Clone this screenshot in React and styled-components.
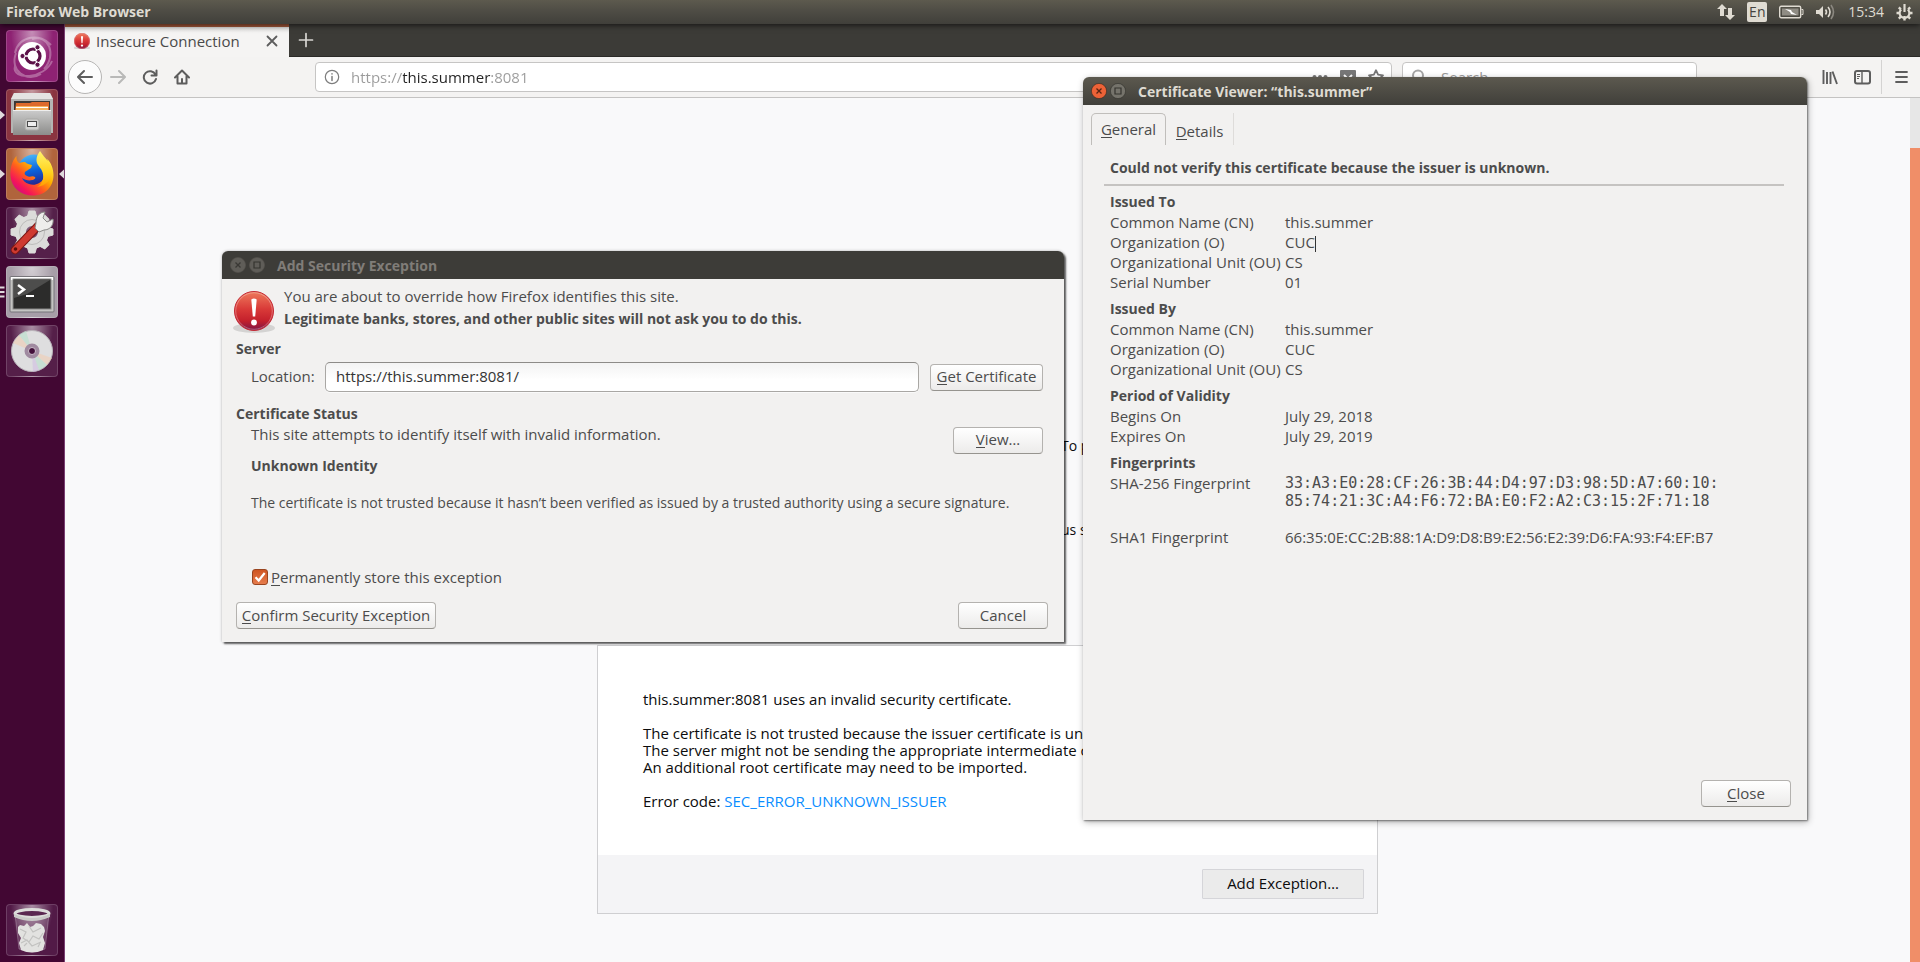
import React from 'react';
import styled, { createGlobalStyle, css } from 'styled-components';

const sans = '"Open Sans", "Noto Sans", sans-serif';
const mono = '"DejaVu Sans Mono", "Liberation Mono", monospace';

const Global = createGlobalStyle`
  * { box-sizing: border-box; }
  html, body, #root { height: 100%; margin: 0; }
  body { font: 15px/20px ${sans}; color: #4c4c4c; overflow: hidden; }
  button, input { font: inherit; color: inherit; margin: 0; }
  h1, h2, p { margin: 0; }
  svg { display: block; flex: none; }
`;

/* ---------- desktop shell ---------- */

const Desktop = styled.div`
  position: relative;
  min-height: 100%;
  display: grid;
  grid-template-columns: 65px 1fr;
  grid-template-rows: 24px 1fr;
  background: #f9f9fa;
`;

const TopBar = styled.header`
  grid-column: 1 / -1;
  display: flex;
  align-items: center;
  justify-content: space-between;
  padding: 0 7px 0 6px;
  color: #dfdbd2;
  background: linear-gradient(#5d5a4e, #504e46 40%, #403f3a);
  box-shadow: 0 1px 6px rgba(0, 0, 0, 0.7);
  z-index: 2;
`;

const AppName = styled.strong`
  font-size: 14px;
`;

const Indicators = styled.div`
  display: flex;
  align-items: center;
  gap: 12px;
  font-size: 14px;
`;

const Keyboard = styled.span`
  width: 20px;
  height: 20px;
  border-radius: 2px;
  background: #dfdbd2;
  color: #45443f;
  font-size: 14px;
  text-align: center;
`;

const Launcher = styled.nav`
  display: flex;
  flex-direction: column;
  gap: 7px;
  padding: 6px 0;
  background: #420733;
  border-right: 1px solid #7a3f72;
`;

const Slot = styled.div`
  position: relative;
  padding-left: 6px;
  ${(p) => p.$last && 'margin-top: auto;'}
`;

const Tile = styled.button`
  display: flex;
  align-items: center;
  justify-content: center;
  width: 52px;
  height: 52px;
  padding: 0;
  border: 1px solid rgba(255, 255, 255, 0.16);
  border-radius: 4px;
  background: ${(p) => p.$bg};
`;

const Marker = styled.svg`
  position: absolute;
  top: 20px;
  ${(p) => (p.$right ? 'right: 0;' : 'left: 0;')}
`;

/* ---------- browser ---------- */

const Browser = styled.main`
  display: grid;
  grid-template-rows: 33px 41px 1fr;
  min-width: 0;
`;

const TabStrip = styled.div`
  display: flex;
  background: #3c3b37;
  border-bottom: 1px solid #2b2a27;
`;

const BrowserTab = styled.div`
  display: flex;
  align-items: center;
  width: 224px;
  height: 33px;
  padding: 0 9px 2px;
  gap: 6px;
  border-top: 3px solid #a2583b;
  background: linear-gradient(#dcdbda, #f5f4f3 6px);
  color: #4a4a4a;
`;

const TabTitle = styled.span`
  flex: 1;
  white-space: nowrap;
`;

const PlainButton = styled.button`
  display: flex;
  align-items: center;
  justify-content: center;
  width: ${(p) => p.$w || 32}px;
  height: ${(p) => p.$h || 32}px;
  padding: 0;
  border: 0;
  background: none;
`;

const BackButton = styled(PlainButton)`
  width: 34px;
  height: 34px;
  border: 1px solid #b6b5b4;
  border-radius: 50%;
  background: #fcfcfc;
`;

const Toolbar = styled.div`
  display: flex;
  align-items: center;
  padding: 0 3px;
  background: #f4f3f2;
  border-bottom: 1px solid #c4c3c2;
`;

const Nav = styled.div`
  display: flex;
  align-items: center;
  width: 247px;
`;

const Field = styled.label`
  display: flex;
  align-items: center;
  gap: ${(p) => (p.$width ? 14 : 11)}px;
  height: 30px;
  padding: 0 7px 0 8px;
  background: #fff;
  border: 1px solid #c6c5c4;
  border-radius: 4px;
  ${(p) => (p.$width ? `width: ${p.$width}px; margin-left: 10px;` : 'flex: 1;')}
`;

const fieldText = css`
  flex: 1;
  min-width: 0;
  padding: 0;
  border: 0;
  outline: 0;
  background: transparent;
`;

/* The host stands out in dark; the scheme and the port stay grey. */
const UrlInput = styled.input`
  ${fieldText}
  color: transparent;
  background: linear-gradient(90deg, #9b9b9b 52px, #222 52px 140px, #9b9b9b 140px);
  background-clip: text;
  -webkit-background-clip: text;
`;

const SearchInput = styled.input`
  ${fieldText}
  &::placeholder { color: #999; opacity: 1; }
`;

const Tools = styled.div`
  display: flex;
  align-items: center;
  padding-left: 117px;
`;

const Divider = styled.span`
  width: 1px;
  height: 34px;
  margin: 0 3px;
  background: #d4d3d2;
`;

const Viewport = styled.div`
  display: grid;
  grid-template-columns: 1fr 10px;
`;

const Page = styled.article`
  width: 781px;
  margin: 0 auto;
  padding-top: 336px;
  color: #0c0c0d;
`;

const PageNote = styled.p`
  height: ${(p) => p.$h}px;
  padding-left: 464px;
  font-size: 14px;
  line-height: 24px;
`;

const Track = styled.div`
  padding-top: 50px;
  background: #e7e7e7;
`;

const Thumb = styled.div`
  height: 100%;
  background: #f08e68;
`;

const Card = styled.section`
  border: 1px solid #cfcfd1;
  background: #fff;
`;

const CardBody = styled.div`
  display: flex;
  flex-direction: column;
  gap: 17px;
  padding: 45px;
  line-height: 17px;
  white-space: nowrap;
`;

const ErrorLink = styled.a`
  color: #0a8dff;
  text-decoration: none;
`;

const CardFooter = styled.footer`
  display: flex;
  justify-content: flex-end;
  padding: 14px 13px;
  background: #f4f4f6;
`;

const ExceptionButton = styled.button`
  width: 162px;
  height: 30px;
  padding: 0 0 2px;
  border: 1px solid #d5d5d9;
  border-radius: 1px;
  background: #ebebeb;
`;

/* ---------- dialog windows ---------- */

const Window = styled.section`
  position: absolute;
  left: ${(p) => p.$x}px;
  top: ${(p) => p.$y}px;
  width: ${(p) => p.$w}px;
  display: flex;
  flex-direction: column;
  ${(p) => p.$h && `height: ${p.$h}px;`}
  background: #f2f1f0;
  border-radius: 6px 6px 0 0;
  box-shadow: ${(p) => (p.$active
    ? '1px 1px 2px rgba(0,0,0,.45), 1px 2px 7px rgba(0,0,0,.3)'
    : '2px 2px 2px rgba(0,0,0,.6), 0 0 3px rgba(0,0,0,.3)')};
  z-index: ${(p) => (p.$active ? 4 : 3)};
`;

const TitleBar = styled.header`
  display: flex;
  align-items: center;
  gap: 3px;
  height: 28px;
  padding: 0 8px;
  border-radius: 6px 6px 0 0;
  color: ${(p) => (p.$active ? '#dfdbd2' : '#807d78')};
  background: ${(p) => (p.$active ? 'linear-gradient(#5c594f, #403f3a)' : '#3d3c38')};
`;

const Title = styled.h1`
  padding: 2px 0 0 9px;
  font-size: 14px;
  line-height: 20px;
`;

const Strong = styled.h2`
  font-size: 14px;
  line-height: 20px;
  padding-left: ${(p) => p.$indent || 0}px;
`;

const Key = styled.span`
  display: inline-block;
  line-height: 18px;
  box-shadow: inset 0 -1px currentColor;
`;

const DialogButton = styled.button`
  width: ${(p) => p.$w}px;
  height: 27px;
  padding: 0 0 2px;
  border: 1px solid #b4b2af;
  border-bottom-color: #96948f;
  border-radius: 4px;
  line-height: 20px;
  white-space: nowrap;
  background: linear-gradient(#fff, #ecebea);
`;

const ExceptionBody = styled.div`
  display: flex;
  flex-direction: column;
  padding: 6px 16px 13px 14px;
`;

const Intro = styled.div`
  display: flex;
  align-items: flex-start;
  gap: 8px;
  height: 54px;
  margin-left: -4px;
  line-height: 22px;
`;

const IntroBold = styled.strong`
  font-size: 14px;
`;

const LocationRow = styled.div`
  display: flex;
  align-items: center;
  gap: 11px;
  margin: 3px 5px 12px 15px;
`;

const LocationLabel = styled.label`
  width: 63px;
  padding-bottom: 2px;
`;

const LocationInput = styled.input`
  flex: 1;
  height: 30px;
  padding: 0 10px 2px;
  border: 1px solid #a9a7a4;
  border-top-color: #8d8b88;
  border-radius: 5px;
  color: #333;
  background: linear-gradient(#f3f3f3, #fff 60%);
  box-shadow: 0 1px #fafafa;
`;

const StatusRow = styled.div`
  display: flex;
  justify-content: space-between;
  height: 32px;
  padding: 0 5px 0 15px;
`;

const StatusAction = styled.div`
  align-self: center;
  display: flex;
`;

const Description = styled.p`
  margin: 17px 0 54px;
  padding-left: 15px;
  font-size: 14px;
  white-space: nowrap;
`;

const CheckLabel = styled.label`
  display: flex;
  align-items: center;
  gap: 3px;
  margin: 0 0 15px 16px;
`;

const Check = styled.input`
  appearance: none;
  width: 16px;
  height: 16px;
  border: 1px solid #99441f;
  border-radius: 3px;
  background: url("data:image/svg+xml,%3Csvg xmlns='http://www.w3.org/2000/svg' viewBox='0 0 14 14'%3E%3Cpath d='M2.5 7.2l3.2 3.3L11.7 3' fill='none' stroke='white' stroke-width='2.2'/%3E%3C/svg%3E"),
    linear-gradient(#cf5522, #e67c4c);
`;

const Actions = styled.div`
  display: flex;
  justify-content: ${(p) => (p.$end ? 'flex-end' : 'space-between')};
  ${(p) => p.$end && 'margin-top: auto; padding: 0 16px 13px;'}
`;

const Tabs = styled.div`
  display: flex;
  padding: 8px 8px 0;
`;

const Tab = styled.button`
  height: 32px;
  background: none;
  ${(p) => (p.$selected
    ? 'width: 75px; padding: 0 0 2px; border: 1px solid #c0bebb; border-bottom: 0; border-radius: 5px 5px 0 0;'
    : 'width: 68px; padding: 4px 0 0; border: 0; border-right: 1px solid #dedcda;')}
`;

const Panel = styled.div`
  margin: 13px 23px 0 21px;
`;

const Verdict = styled(Strong)`
  padding: 0 6px;
  margin-bottom: 6px;
`;

const Rule = styled.hr`
  height: 2px;
  margin: 0 0 6px;
  border: 0;
  background: #c5c3c1;
`;

const CertTable = styled.table`
  width: 100%;
  table-layout: fixed;
  border-spacing: 0;
  padding: 0 6px;
  text-align: left;
`;

const NameColumn = styled.col`
  width: 175px;
`;

const Group = styled.th`
  padding: ${(p) => (p.$first ? 0 : 7)}px 0 0;
  font-size: 14px;
`;

const Name = styled.th`
  padding: 0;
  font-weight: 400;
  vertical-align: top;
  white-space: nowrap;
`;

const Value = styled.td`
  padding: 0;
  vertical-align: top;
  white-space: nowrap;
  ${(p) => p.$mono && `height: 54px; padding-top: 1px; font: 15px/18px ${mono};`}
`;

const Caret = styled.span`
  display: inline-block;
  width: 1px;
  height: 16px;
  background: #333;
  vertical-align: middle;
`;

/* ---------- drawings ---------- */

const Alert = ({ w, h, view = '0 -1 44 50' }) => (
  <svg width={w} height={h} viewBox={view} aria-hidden="true">
    <defs>
      <linearGradient id="alertFill" x1="0" y1="0" x2="0" y2="1">
        <stop offset="0" stopColor="#ee7a5c" />
        <stop offset=".45" stopColor="#d93a38" />
        <stop offset=".75" stopColor="#c4202c" />
        <stop offset="1" stopColor="#7d1546" />
      </linearGradient>
    </defs>
    <ellipse cx="22" cy="42" rx="21" ry="5" fill="#000" opacity=".12" />
    <circle cx="22" cy="25" r="19.5" fill="url(#alertFill)" stroke="#c42a35" />
    <circle cx="22" cy="25" r="18.3" fill="none" stroke="#fff" strokeOpacity=".3" />
    <path d="M19.3 13.5q2.7-2 5.4 0l-1.5 17h-2.4z" fill="#fff" />
    <circle cx="22" cy="36.5" r="2.9" fill="#fff" />
  </svg>
);

const Controls = ({ active }) => (
  <>
    <PlainButton $w={16} $h={16} aria-label="Close window">
      <svg width="16" height="16" viewBox="0 0 16 16">
        <circle cx="8" cy="8" r="7.6" fill={active ? '#ec6237' : '#5f5d58'} stroke={active ? '#3a2a20' : '#55534e'} strokeWidth=".6" />
        <path d="M5.5 5.5l5 5m0-5l-5 5" stroke={active ? '#582412' : '#3a3935'} strokeWidth="1.3" />
      </svg>
    </PlainButton>
    <PlainButton $w={16} $h={16} aria-label="Maximize window">
      <svg width="16" height="16" viewBox="0 0 16 16">
        <circle cx="8" cy="8" r="7.6" fill={active ? '#75736b' : '#5f5d58'} stroke={active ? '#33322e' : '#55534e'} strokeWidth=".6" />
        <path d="M5 5h6v6H5z" fill="none" stroke="#35342f" strokeWidth="1.2" />
      </svg>
    </PlainButton>
  </>
);

const Stroke = ({ d, w = 16, color = '#5d5d5d', sw = 2, children }) => (
  <svg width={w} height={w} viewBox="0 0 16 16" fill="none" stroke={color} strokeWidth={sw} strokeLinecap="round" strokeLinejoin="round">
    <path d={d} />
    {children}
  </svg>
);

const UbuntuIcon = () => (
  <svg width="50" height="50" viewBox="0 0 50 50">
    <path d="M25 8C42 3 50 24 37 38M8 22C12 4 34 2 44 14M8 35C4 50 38 48 45 30M9 22C2 40 20 52 34 43" fill="none" stroke="#fff" strokeOpacity=".3" strokeWidth="2" />
    <circle cx="25" cy="25" r="14" fill="#fff" />
    <circle cx="26" cy="25" r="7" fill="none" stroke="#5c1148" strokeWidth="3.2" />
    <path d="M26 25L16 25M26 25l6-10M26 25l6 10" stroke="#fff" strokeWidth="1.4" />
    <circle cx="26" cy="25" r="5" fill="#fff" />
    <g fill="#5c1148" stroke="#fff" strokeWidth="1">
      <circle cx="15.5" cy="25" r="2.6" /><circle cx="30.5" cy="16.3" r="2.6" /><circle cx="30.5" cy="33.7" r="2.6" />
    </g>
  </svg>
);

const FilesIcon = () => (
  <svg width="50" height="50" viewBox="0 0 50 50">
    <defs>
      <linearGradient id="steel" x1="0" y1="0" x2="0" y2="1"><stop offset="0" stopColor="#ccc" /><stop offset="1" stopColor="#8c8c8a" /></linearGradient>
    </defs>
    <path d="M7 3h36l3 6v34H4V9z" fill="#b5b5b3" />
    <path d="M7 3h36l3 6H4z" fill="#e4e4e2" />
    <path d="M7 11h36v11H7z" fill="#3c3835" />
    <path d="M9 13h14l2-1h17v9H8z" fill="#dd6a2c" />
    <path d="M9 16h32v5H9z" fill="#f5b35c" /><path d="M9 17h32v1H9z" fill="#fff" />
    <path d="M6 20h38v25H6z" fill="url(#steel)" />
    <path d="M6 20h38v1H6z" fill="#eee" />
    <rect x="18" y="29" width="14" height="11" rx="2" fill="#cfcfcd" stroke="#a8a8a6" />
    <rect x="20.5" y="31.500" width="9" height="5" fill="#eee" stroke="#4a4a4a" />
  </svg>
);

const FirefoxIcon = () => (
  <svg width="50" height="50" viewBox="0 0 50 50">
    <defs>
      <linearGradient id="fox" x1=".9" y1=".1" x2=".15" y2=".9">
        <stop offset="0" stopColor="#fff04a" /><stop offset=".35" stopColor="#ffb300" />
        <stop offset=".6" stopColor="#ff5a1f" /><stop offset=".85" stopColor="#f5145a" /><stop offset="1" stopColor="#d0107e" />
      </linearGradient>
      <linearGradient id="globe" x1=".3" y1="0" x2=".5" y2="1"><stop offset="0" stopColor="#4cb8f8" /><stop offset=".5" stopColor="#0b62dc" /><stop offset="1" stopColor="#2b1c80" /></linearGradient>
      <linearGradient id="flame" x1="0" y1="0" x2="0" y2="1"><stop offset="0" stopColor="#fff36e" /><stop offset=".6" stopColor="#ffd21c" /><stop offset="1" stopColor="#ff9a00" /></linearGradient>
    </defs>
    <circle cx="27" cy="22" r="16.500" fill="url(#globe)" />
    <path d="M9.500 7C5 12 3 19 3.500 27 4.500 39 14 46.500 26 46.500 38 46.500 46.500 38 46.500 26 46.500 20 44 13 40 10c2 5 1 13-3 19-3 6-10 8-15 6-4-1-6-4-7-6 3 2 7 3 10 2 2 0 4-2 3-3-3-2-5 1-8-1-2-1-3-2-2-4 1-1 3-2 6-4l1-3c-3-1-5-1-7-3-4 0-5 1-6 1-1-1-3-3-2.500-7z" fill="url(#fox)" />
    <path d="M33 2c-3 4-5 9-2 14 3 4 6 7 5 14-1 3-2 6-6 8 9-1 15-8 15-16 0-8-7-12-12-20z" fill="url(#flame)" />
  </svg>
);

const SettingsIcon = () => (
  <svg width="50" height="50" viewBox="0 0 50 50">
    <g fill="#dcdcda">
      {[0, 45, 90, 135, 180, 225, 270, 315].map((a) => (
        <path key={a} d="M20 10l2-7h6l2 7z" stroke="#dcdcda" transform={`rotate(${a} 25 24)`} />
      ))}
    </g>
    <circle cx="25" cy="24" r="11.500" fill="none" stroke="#dcdcda" strokeWidth="11" />
    <circle cx="25" cy="24" r="12.500" fill="none" stroke="#bdbdbb" />
    <path d="M8 42L31 18" stroke="#7a1713" strokeWidth="8.500" strokeLinecap="round" />
    <path d="M8 42L31 18" stroke="#cf3a30" strokeWidth="6.500" strokeLinecap="round" />
    <circle cx="8.500" cy="41" r="1.800" fill="#5b0d0b" />
    <path d="M29 15c0-6 3-11 9-11l-2 6 4 4 6-3c1 6-3 11-9 11l-5 2-4-4z" fill="#eeeeec" stroke="#8a8a88" />
  </svg>
);

const TerminalIcon = () => (
  <svg width="50" height="50" viewBox="0 0 50 50">
    <rect x="3" y="9.500" width="44" height="35.500" rx="1" fill="#c4c4c2" stroke="#77757a" />
    <path d="M4 10h42v3H4z" fill="#fff" />
    <rect x="6" y="12" width="38" height="30" fill="#2c2c2b" stroke="#888" />
    <path d="M7 13h36L20 27 7 31z" fill="#4d4d4c" />
    <path d="M11 18l6 4.500-6 4.500" fill="none" stroke="#fff" strokeWidth="2.500" />
    <path d="M19 29h8" stroke="#fff" strokeWidth="2" />
  </svg>
);

const DiscIcon = () => (
  <svg width="50" height="50" viewBox="0 0 50 50">
    <circle cx="25" cy="25" r="20.500" fill="#dededf" stroke="#b9b3ba" />
    <path d="M25 25L6 17l6-8zM25 25l20 7-5 7z" fill="#f0cdb4" opacity=".6" />
    <path d="M25 25L12 9l7-4zM25 25l15 14-8 5z" fill="#b8e0cc" opacity=".6" />
    <path d="M25 25l7 19-6 2z" fill="#cdb8e4" opacity=".5" />
    <circle cx="25" cy="25" r="5.500" fill="none" stroke="#a08aa0" strokeWidth="4" />
    <circle cx="25" cy="25" r="3.500" fill="#42103a" stroke="#cbbccb" />
  </svg>
);

const TrashIcon = () => (
  <svg width="50" height="50" viewBox="0 0 50 50">
    <path d="M8 9l4 35q13 6 26 0l4-35z" fill="#fff" fillOpacity=".14" stroke="#fff" strokeOpacity=".25" />
    <path d="M11 22l2-2 4 1 3-3 3 4 3-1 3-3 5 1 3 3 1 4-2 6 2 6-2 7q-11 5-22 0l-2-7 2-5-3-5z" fill="#e2e2e0" />
    <path d="M13 24l6 3-3 6 6 4 4-6 6 3 4-6M14 38l6-3 5 6 9-4M22 21l4 6 8-4M17 41l3-3M31 42l2-4" fill="none" stroke="#c2c2c0" strokeWidth="1.200" />
    <ellipse cx="25" cy="8.500" rx="17" ry="4" fill="#5a2750" stroke="#dcdcda" strokeWidth="3" />
    <path d="M7 9q18 8 36 0v3q-18 8-36 0z" fill="#c9c9c7" />
  </svg>
);

const tileShine = 'radial-gradient(ellipse at 50% 0, rgba(255,255,255,.5), rgba(255,255,255,0) 60%)';
const launcherItems = [
  { name: 'Search your computer', bg: `${tileShine}, #8e2273`, Icon: UbuntuIcon },
  { name: 'Files', bg: `${tileShine}, #8a3440`, Icon: FilesIcon, left: 'arrow' },
  { name: 'Firefox Web Browser', bg: `${tileShine}, #b0643c`, Icon: FirefoxIcon, left: 'arrow', right: true },
  { name: 'System Settings', bg: `${tileShine}, #55204a`, Icon: SettingsIcon },
  { name: 'Terminal', bg: `${tileShine}, #a79ea8`, Icon: TerminalIcon, left: 'dashes' },
  { name: 'Disc', bg: `${tileShine}, #551f49`, Icon: DiscIcon },
  { name: 'Trash', bg: `${tileShine}, #521a47`, Icon: TrashIcon, last: true },
];

const certificate = [
  { group: 'Issued To', rows: [['Common Name (CN)', 'this.summer'], ['Organization (O)', 'CUC', 'caret'], ['Organizational Unit (OU)', 'CS'], ['Serial Number', '01']] },
  { group: 'Issued By', rows: [['Common Name (CN)', 'this.summer'], ['Organization (O)', 'CUC'], ['Organizational Unit (OU)', 'CS']] },
  { group: 'Period of Validity', rows: [['Begins On', 'July 29, 2018'], ['Expires On', 'July 29, 2019']] },
  {
    group: 'Fingerprints',
    rows: [
      ['SHA-256 Fingerprint', '33:A3:E0:28:CF:26:3B:44:D4:97:D3:98:5D:A7:60:10:\n85:74:21:3C:A4:F6:72:BA:E0:F2:A2:C3:15:2F:71:18', 'mono'],
      ['SHA1 Fingerprint', '66:35:0E:CC:2B:88:1A:D9:D8:B9:E2:56:E2:39:D6:FA:93:F4:EF:B7'],
    ],
  },
];

function SystemBar() {
  return (
    <TopBar>
      <AppName>Firefox Web Browser</AppName>
      <Indicators>
        <svg width="18" height="18" viewBox="0 0 18 18" fill="#dfdbd2">
          <path d="M5 1l5 5H7v7H3V6H0zM13 17l-5-5h3V5h4v7h3z" />
        </svg>
        <Keyboard>En</Keyboard>
        <svg width="25" height="14" viewBox="0 0 25 14" fill="none" stroke="#dfdbd2">
          <rect x=".7" y="1.200" width="21" height="11.500" rx="1.500" strokeWidth="1.400" />
          <rect x="3" y="3.500" width="16.500" height="7" fill="#8f8c84" stroke="none" />
          <path d="M22.500 4.500h1.500v5h-1.500" />
          <path d="M6 4l6 1 1 2 5 3-6-1-1-2z" fill="#fff" stroke="none" />
        </svg>
        <svg width="20" height="18" viewBox="0 0 20 18" fill="none" stroke="#dfdbd2" strokeWidth="1.600">
          <path d="M0 7h3l4-4v12l-4-4H0z" fill="#dfdbd2" stroke="none" />
          <path d="M9.500 6.500q2 2.500 0 5M12 4q4 5 0 10" />
          <path d="M15 2q5 7 0 14" stroke="#8b8880" />
        </svg>
        <span>15:34</span>
        <svg width="17" height="17" viewBox="0 0 17 17" fill="none" stroke="#dfdbd2">
          <path d="M8.500 12v4.500M.5 9h3M13.500 9h3M2.800 3.300l2 2M14.200 3.300l-2 2M2.800 14.700l2-2M14.200 14.700l-2-2" strokeWidth="2.400" />
          <path d="M5.200 5.500a4.900 4.900 0 1 0 6.600 0" strokeWidth="2.200" />
          <path d="M8.500 0v8" strokeWidth="2.200" />
        </svg>
      </Indicators>
    </TopBar>
  );
}

function Dock() {
  return (
    <Launcher aria-label="Launcher">
      {launcherItems.map(({ name, bg, Icon, left, right, last }) => (
        <Slot key={name} $last={last}>
          {left && (
            <Marker width="5" height="12" viewBox="0 0 5 12">
              {left === 'arrow'
                ? <path d="M0 1.500L5 6 0 10.500z" fill="#dfd9dc" />
                : <path d="M0 1.500h4.500M0 6h4.500M0 10.500h4.500" stroke="#dfd9dc" strokeWidth="2" />}
            </Marker>
          )}
          <Tile $bg={bg} aria-label={name}><Icon /></Tile>
          {right && <Marker $right width="5" height="12" viewBox="0 0 5 12"><path d="M5 1.500L0 6l5 4.500z" fill="#dfd9dc" /></Marker>}
        </Slot>
      ))}
    </Launcher>
  );
}

function BrowserWindow() {
  return (
    <Browser>
      <TabStrip>
        <BrowserTab>
          <Alert w={16} h={16} view="2 5 40 40" />
          <TabTitle>Insecure Connection</TabTitle>
          <PlainButton $w={16} $h={16} aria-label="Close tab"><Stroke d="M3.500 3.500l9 9m0-9l-9 9" sw={1.8} /></PlainButton>
        </BrowserTab>
        <PlainButton $w={34} aria-label="New tab"><Stroke d="M8 1.500v13M1.500 8h13" color="#d8d6d2" sw={1.7} /></PlainButton>
      </TabStrip>
      <Toolbar>
        <Nav>
          <BackButton aria-label="Back"><Stroke d="M15 8H1.500M7 2L1 8l6 6" /></BackButton>
          <PlainButton aria-label="Forward"><Stroke d="M1 8h13.500M9 2l6 6-6 6" color="#b9b9b8" /></PlainButton>
          <PlainButton aria-label="Reload"><Stroke d="M13.500 5.500A6.200 6.200 0 1 0 14 10M14.500 1.500v5h-5" /></PlainButton>
          <PlainButton aria-label="Home"><Stroke d="M1 8.500L8 1.500l7 7M3.500 7.500V14.500h9V7.500M8 14v-4" /></PlainButton>
        </Nav>
        <Field>
          <Stroke d="M8 7.500v4M8 4.800v.1" sw={1.5} color="#7d7d7d"><circle cx="8" cy="8" r="6.700" strokeWidth="1.200" /></Stroke>
          <UrlInput aria-label="Address" defaultValue="https://this.summer:8081" />
          <svg width="16" height="16" viewBox="0 0 16 16" fill="#777"><circle cx="2.500" cy="8" r="2" /><circle cx="8" cy="8" r="2" /><circle cx="13.500" cy="8" r="2" /></svg>
          <svg width="18" height="16" viewBox="0 0 18 16"><path d="M1 2q0-1 1-1h14q1 0 1 1v6a8 7 0 0 1-16 0z" fill="#777" /><path d="M5 6l4 4 4-4" fill="none" stroke="#fff" strokeWidth="2" /></svg>
          <Stroke d="M8 1.200l2.100 4.500 4.900.6-3.600 3.400.9 4.900L8 12.200l-4.300 2.400.9-4.900L1 6.300l4.900-.6z" color="#777" sw={1.8} />
        </Field>
        <Field $width={295}>
          <Stroke d="M10.500 10.500L14.500 14.500" color="#a5a5a5"><circle cx="7" cy="6.500" r="5" /></Stroke>
          <SearchInput aria-label="Search" placeholder="Search" />
        </Field>
        <Tools>
          <PlainButton aria-label="Library">
            <svg width="16" height="16" viewBox="0 0 16 16" stroke="#5d5d5d" strokeWidth="1.900"><path d="M1.500 1v14M5 3v12M8.500 3v12M10.500 2.500L15 15" /></svg>
          </PlainButton>
          <PlainButton aria-label="Sidebars">
            <svg width="17" height="16" viewBox="0 0 17 16" fill="none" stroke="#5d5d5d"><rect x="1" y="2" width="15" height="12.500" rx="2" strokeWidth="2" /><path d="M8 2v12" strokeWidth="1.400" /><path d="M3 5.500h3M3 7.500h3M3 9.500h2" /></svg>
          </PlainButton>
          <Divider />
          <PlainButton aria-label="Menu"><Stroke d="M3 3h11M3 8h11M3 13h11" sw={1.8} /></PlainButton>
        </Tools>
      </Toolbar>
      <Viewport>
        <Page>
          <PageNote $h={84}>To p</PageNote>
          <PageNote $h={127}>us s</PageNote>
          <Card>
            <CardBody>
              <p>this.summer:8081 uses an invalid security certificate.</p>
              <p>
                The certificate is not trusted because the issuer certificate is unknown.<br />
                The server might not be sending the appropriate intermediate certificates.<br />
                An additional root certificate may need to be imported.
              </p>
              <p>Error code: <ErrorLink href="#error">SEC_ERROR_UNKNOWN_ISSUER</ErrorLink></p>
            </CardBody>
            <CardFooter><ExceptionButton>Add Exception…</ExceptionButton></CardFooter>
          </Card>
        </Page>
        <Track><Thumb /></Track>
      </Viewport>
    </Browser>
  );
}

function ExceptionDialog() {
  return (
    <Window $x={222} $y={251} $w={842} role="dialog" aria-label="Add Security Exception">
      <TitleBar><Controls /><Title>Add Security Exception</Title></TitleBar>
      <ExceptionBody>
        <Intro>
          <Alert w={44} h={50} />
          <div>
            <p>You are about to override how Firefox identifies this site.</p>
            <IntroBold>Legitimate banks, stores, and other public sites will not ask you to do this.</IntroBold>
          </div>
        </Intro>
        <Strong>Server</Strong>
        <LocationRow>
          <LocationLabel htmlFor="location">Location:</LocationLabel>
          <LocationInput id="location" defaultValue="https://this.summer:8081/" />
          <DialogButton $w={113}><Key>G</Key>et Certificate</DialogButton>
        </LocationRow>
        <Strong>Certificate Status</Strong>
        <StatusRow>
          <p>This site attempts to identify itself with invalid information.</p>
          <StatusAction><DialogButton $w={90}><Key>V</Key>iew…</DialogButton></StatusAction>
        </StatusRow>
        <Strong $indent={15}>Unknown Identity</Strong>
        <Description>
          The certificate is not trusted because it hasn’t been verified as issued by a trusted authority using a secure signature.
        </Description>
        <CheckLabel>
          <Check type="checkbox" defaultChecked />
          <span><Key>P</Key>ermanently store this exception</span>
        </CheckLabel>
        <Actions>
          <DialogButton $w={200}><Key>C</Key>onfirm Security Exception</DialogButton>
          <DialogButton $w={90}>Cancel</DialogButton>
        </Actions>
      </ExceptionBody>
    </Window>
  );
}

function CertificateViewer() {
  return (
    <Window $active $x={1083} $y={77} $w={724} $h={743} role="dialog" aria-label="Certificate Viewer">
      <TitleBar $active><Controls active /><Title>Certificate Viewer: “this.summer”</Title></TitleBar>
      <Tabs role="tablist">
        <Tab role="tab" aria-selected="true" $selected><Key>G</Key>eneral</Tab>
        <Tab role="tab" aria-selected="false"><Key>D</Key>etails</Tab>
      </Tabs>
      <Panel role="tabpanel">
        <Verdict>Could not verify this certificate because the issuer is unknown.</Verdict>
        <Rule />
        <CertTable>
          <colgroup><NameColumn /><col /></colgroup>
          {certificate.map(({ group, rows }, i) => (
            <tbody key={group}>
              <tr><Group colSpan="2" scope="rowgroup" $first={i === 0}>{group}</Group></tr>
              {rows.map(([name, value, kind]) => (
                <tr key={name}>
                  <Name scope="row">{name}</Name>
                  <Value $mono={kind === 'mono'}>
                    {value.split('\n').map((line) => <div key={line}>{line}{kind === 'caret' && <Caret />}</div>)}
                  </Value>
                </tr>
              ))}
            </tbody>
          ))}
        </CertTable>
      </Panel>
      <Actions $end><DialogButton $w={90}><Key>C</Key>lose</DialogButton></Actions>
    </Window>
  );
}

export default function App() {
  return (
    <Desktop>
      <Global />
      <SystemBar />
      <Dock />
      <BrowserWindow />
      <ExceptionDialog />
      <CertificateViewer />
    </Desktop>
  );
}
